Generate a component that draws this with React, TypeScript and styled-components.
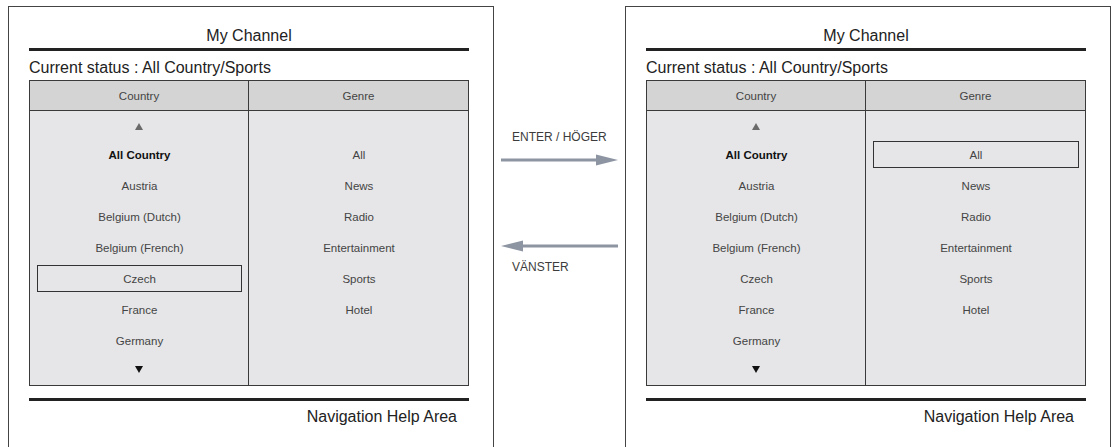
import styled, { createGlobalStyle } from 'styled-components';

const GlobalStyle = createGlobalStyle`
  html, body {
    margin: 0;
    background: #fff;
  }
  body {
    font-family: "Liberation Sans", Arial, sans-serif;
    color: #222;
  }
`;

// ─── Layout ────────────────────────────────────────────────────────────────

const Page = styled.div`
  display: flex;
  align-items: flex-start;
  padding: 6px 0 0 8px;
  height: 447px;
  box-sizing: border-box;
  overflow: hidden;
`;

const Panel = styled.section`
  width: 486px;
  height: 470px;
  box-sizing: border-box;
  border: 1.5px solid #444;
  border-bottom: none;
  padding: 0 24px 0 20px;
  display: flex;
  flex-direction: column;
`;

const Title = styled.div`
  text-align: center;
  font-size: 16px;
  line-height: 20px;
  padding: 19px 0 2px;
  border-bottom: 3px solid #222;
  color: #222;
`;

const Status = styled.div`
  font-size: 16px;
  line-height: 20px;
  margin: 7px 0 2px;
  color: #222;
`;

// ─── Table ─────────────────────────────────────────────────────────────────

const Table = styled.div`
  display: grid;
  grid-template-columns: 1fr 1fr;
  border: 1.5px solid #3a3a3a;
`;

const Column = styled.div<{ $first?: boolean }>`
  display: flex;
  flex-direction: column;
  border-right: ${({ $first }) => ($first ? '1.5px solid #3a3a3a' : 'none')};
`;

const HeaderCell = styled.div`
  height: 29px;
  background: #d4d4d4;
  border-bottom: 1.5px solid #3a3a3a;
  display: flex;
  align-items: center;
  justify-content: center;
  font-size: 11.5px;
  color: #444;
`;

const List = styled.div`
  flex: 1;
  background: #e6e6e8;
  padding: 2px 0 3px;
  display: flex;
  flex-direction: column;
`;

const ScrollRow = styled.div`
  height: 26px;
  display: flex;
  align-items: center;
  justify-content: center;
`;

const Item = styled.div<{ $selected?: boolean; $bold?: boolean }>`
  height: 27px;
  margin: 2px 6px 2px 7px;
  box-sizing: border-box;
  border: 1.5px solid ${({ $selected }) => ($selected ? '#333' : 'transparent')};
  display: flex;
  align-items: center;
  justify-content: center;
  font-size: 11.5px;
  font-weight: ${({ $bold }) => ($bold ? 700 : 400)};
  color: ${({ $bold }) => ($bold ? '#111' : '#444')};
`;

const BottomRule = styled.div`
  margin-top: 12px;
  border-top: 3px solid #222;
`;

const HelpText = styled.div`
  text-align: right;
  padding: 6px 12px 0 0;
  font-size: 16px;
  line-height: 20px;
  color: #222;
`;

// ─── Middle arrows ─────────────────────────────────────────────────────────

const Middle = styled.div`
  width: 131px;
  flex-shrink: 0;
  box-sizing: border-box;
  padding: 124px 0 0 7px;
  display: flex;
  flex-direction: column;
`;

const ArrowLabel = styled.div<{ $gap: number }>`
  font-size: 12px;
  line-height: 14px;
  color: #3c3c3c;
  padding-left: 11px;
  margin-top: ${({ $gap }) => $gap}px;
`;

const ArrowSvg = styled.svg<{ $gap: number }>`
  display: block;
  margin-top: ${({ $gap }) => $gap}px;
`;

function Arrow({ dir, gap }: { dir: 'right' | 'left'; gap: number }) {
  return (
    <ArrowSvg $gap={gap} width="117" height="12" viewBox="0 0 117 12">
      {dir === 'right' ? (
        <>
          <rect x="0" y="4.5" width="97" height="3" fill="#8d95a2" />
          <polygon points="95,0.5 117,6 95,11.5" fill="#8d95a2" />
        </>
      ) : (
        <>
          <rect x="20" y="4.5" width="97" height="3" fill="#8d95a2" />
          <polygon points="22,0.5 0,6 22,11.5" fill="#8d95a2" />
        </>
      )}
    </ArrowSvg>
  );
}

function Tri({ up }: { up?: boolean }) {
  return (
    <svg width="8" height="7" viewBox="0 0 8 7">
      {up ? (
        <polygon points="4,0 8,7 0,7" fill="#6a6a6a" />
      ) : (
        <polygon points="0,0 8,0 4,7" fill="#111" />
      )}
    </svg>
  );
}

// ─── Data ──────────────────────────────────────────────────────────────────

const COUNTRIES = [
  'All Country',
  'Austria',
  'Belgium (Dutch)',
  'Belgium (French)',
  'Czech',
  'France',
  'Germany',
];

const GENRES = ['All', 'News', 'Radio', 'Entertainment', 'Sports', 'Hotel'];

function ChannelPanel({ country, genre }: { country?: string; genre?: string }) {
  return (
    <Panel>
      <Title>My Channel</Title>
      <Status>Current status : All Country/Sports</Status>
      <Table>
        <Column $first>
          <HeaderCell>Country</HeaderCell>
          <List>
            <ScrollRow>
              <Tri up />
            </ScrollRow>
            {COUNTRIES.map((c) => (
              <Item key={c} $bold={c === 'All Country'} $selected={c === country}>
                {c}
              </Item>
            ))}
            <ScrollRow>
              <Tri />
            </ScrollRow>
          </List>
        </Column>
        <Column>
          <HeaderCell>Genre</HeaderCell>
          <List>
            <ScrollRow />
            {GENRES.map((g) => (
              <Item key={g} $selected={g === genre}>
                {g}
              </Item>
            ))}
          </List>
        </Column>
      </Table>
      <BottomRule />
      <HelpText>Navigation Help Area</HelpText>
    </Panel>
  );
}

export default function App() {
  return (
    <>
      <GlobalStyle />
      <Page>
        <ChannelPanel country="Czech" />
        <Middle>
          <ArrowLabel $gap={0}>ENTER / HÖGER</ArrowLabel>
          <Arrow dir="right" gap={10} />
          <Arrow dir="left" gap={74} />
          <ArrowLabel $gap={8}>VÄNSTER</ArrowLabel>
        </Middle>
        <ChannelPanel genre="All" />
      </Page>
    </>
  );
}
